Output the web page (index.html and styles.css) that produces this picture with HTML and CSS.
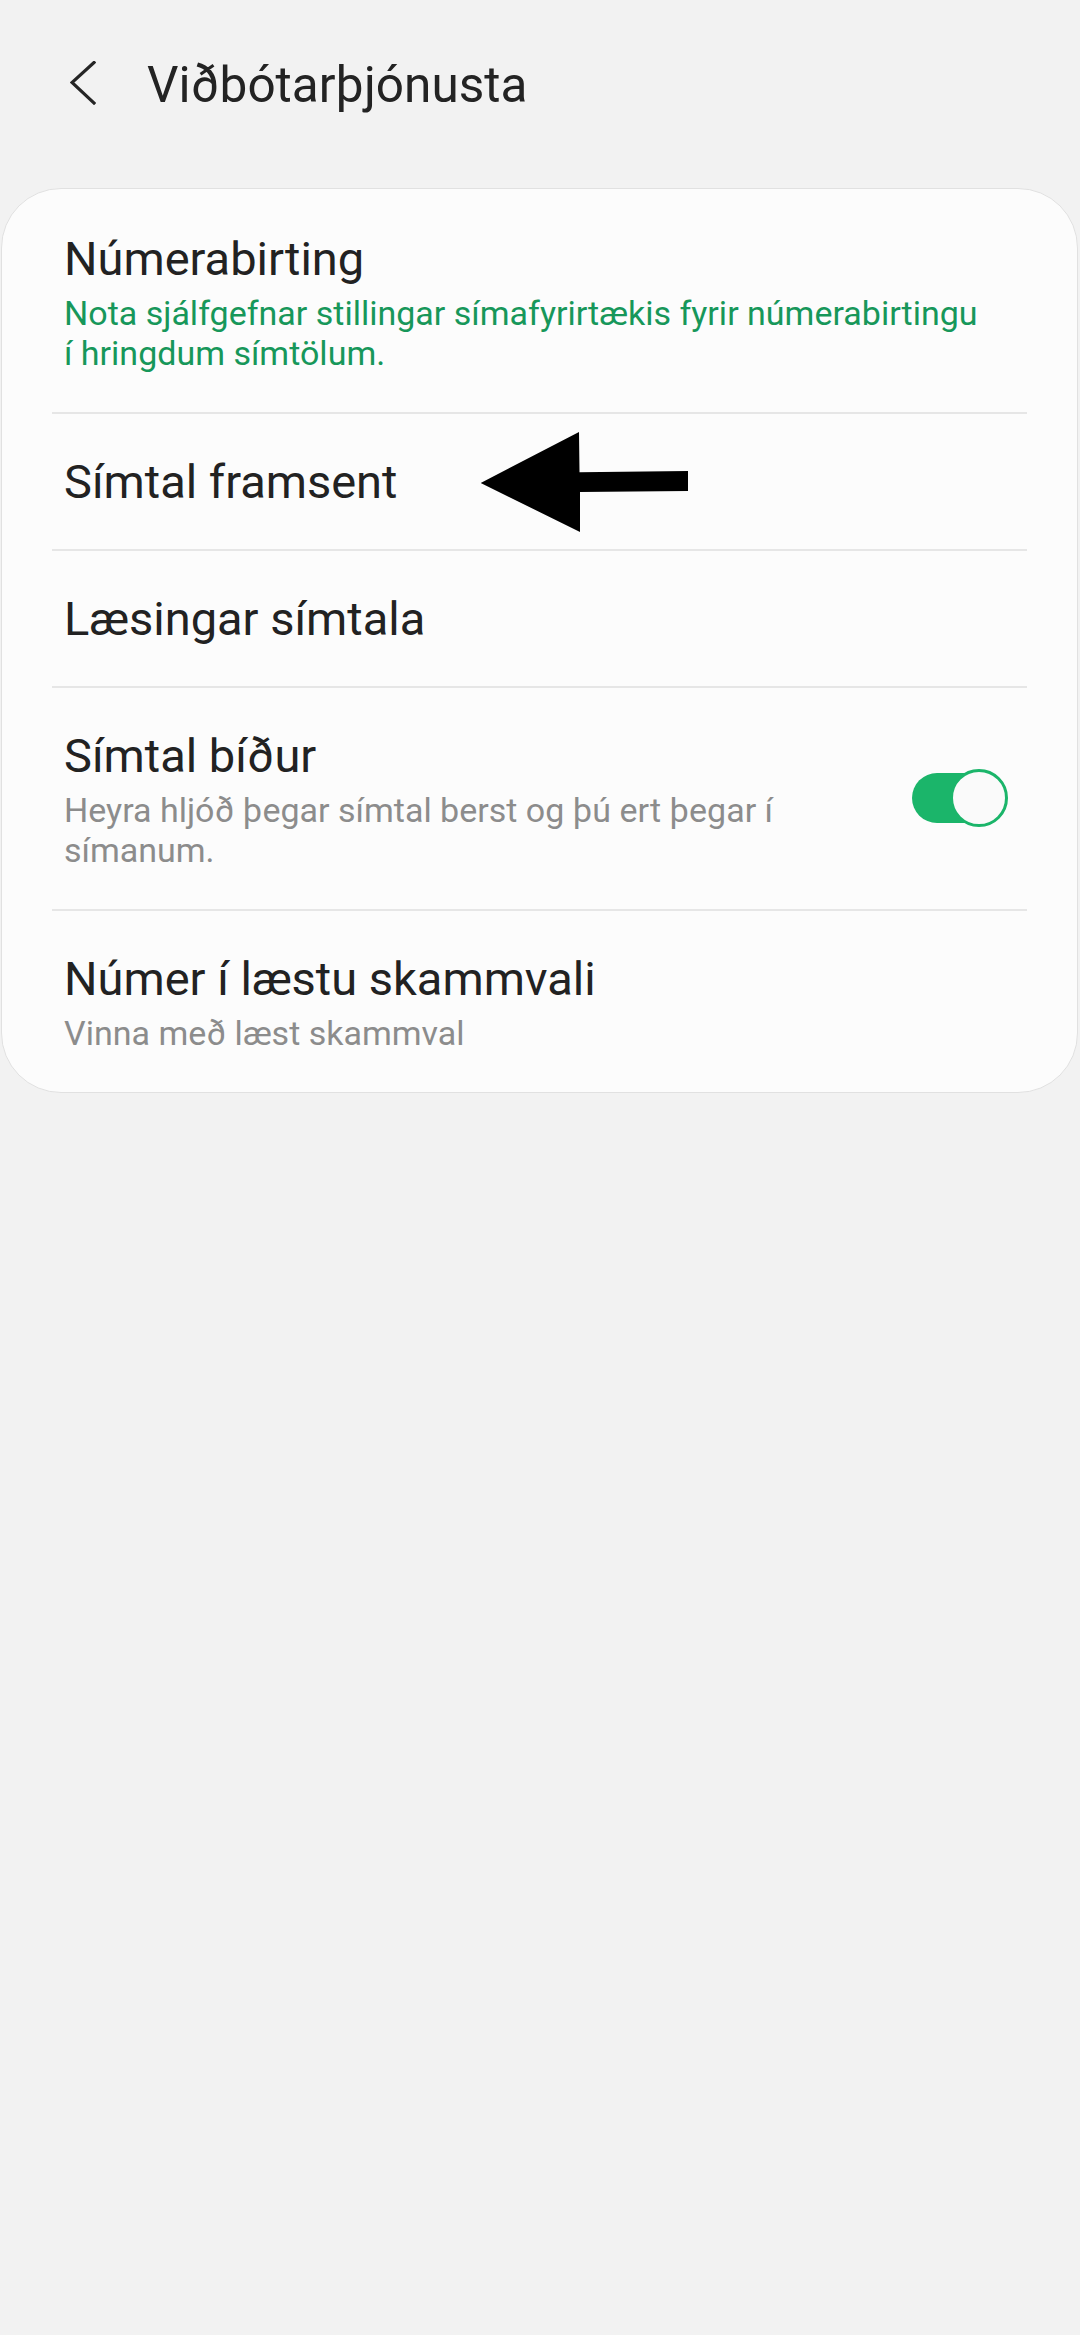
FILE: index.html
```html
<!DOCTYPE html>
<html lang="is">
<head>
<meta charset="utf-8">
<title>Viðbótarþjónusta</title>
<link rel="stylesheet" href="styles.css">
</head>
<body>
<div class="screen">
  <header class="topbar">
    <svg class="back" width="26" height="44" viewBox="0 0 26 44" aria-hidden="true">
      <polyline points="24,1.5 2,21.5 24,42" fill="none" stroke="#252525" stroke-width="3.2" stroke-linecap="square" stroke-linejoin="miter"/>
    </svg>
    <h1 class="title">Viðbótarþjónusta</h1>
  </header>

  <section class="card">
    <div class="row">
      <div class="text">
        <div class="label">Númerabirting</div>
        <div class="summary summary-green">Nota sjálfgefnar stillingar símafyrirtækis fyrir númerabirtingu<br>í hringdum símtölum.</div>
      </div>
    </div>
    <div class="row row-single">
      <div class="text">
        <div class="label">Símtal framsent</div>
      </div>
      <svg class="pointer" width="212" height="104" viewBox="0 0 212 104" aria-hidden="true">
        <polygon points="0.7,52 99,1 99.5,41.3 208,40 208,60 100,61 100,101" fill="#000"/>
      </svg>
    </div>
    <div class="row row-single">
      <div class="text">
        <div class="label">Læsingar símtala</div>
      </div>
    </div>
    <div class="row">
      <div class="text">
        <div class="label">Símtal bíður</div>
        <div class="summary">Heyra hljóð þegar símtal berst og þú ert þegar í<br>símanum.</div>
      </div>
      <div class="switch on" role="switch" aria-checked="true">
        <span class="track"></span>
        <span class="thumb"></span>
      </div>
    </div>
    <div class="row">
      <div class="text">
        <div class="label">Númer í læstu skammvali</div>
        <div class="summary">Vinna með læst skammval</div>
      </div>
    </div>
  </section>
</div>
</body>
</html>
```

FILE: styles.css
```css
html, body {
  margin: 0;
  padding: 0;
  background: #f2f2f2;
}

body {
  font-family: Roboto, "Noto Sans", "Liberation Sans", sans-serif;
  color: #222222;
  width: 1080px;
  min-height: 2335px;
}

.screen {
  display: flex;
  flex-direction: column;
}

.topbar {
  display: flex;
  align-items: flex-start;
  padding: 55px 0 73px 70px;
}

.back {
  flex: none;
  margin-top: 6px;
}

.title {
  margin: 0 0 0 51px;
  font-size: 49.5px;
  font-weight: 400;
  line-height: 60px;
  color: #232323;
}

.card {
  margin: 0 2px 0 1px;
  background: #fcfcfc;
  border: 1.5px solid #e1e1e1;
  border-radius: 60px;
  padding: 0 50px;
  display: flex;
  flex-direction: column;
}

.row {
  position: relative;
  display: flex;
  align-items: center;
  padding: 40px 19px 39px 12px;
}

.row:first-child {
  padding-top: 42px;
}

.row + .row {
  border-top: 2px solid #e6e6e6;
}

.row-single {
  padding-top: 40px;
  padding-bottom: 39px;
}

.text {
  flex: 1;
  min-width: 0;
}

.label {
  font-size: 47px;
  line-height: 56px;
  color: #222222;
  white-space: nowrap;
}

.summary {
  margin-top: 6px;
  font-size: 34px;
  line-height: 40px;
  color: #8c8c8c;
  white-space: nowrap;
}

.summary-green {
  color: #17975a;
}

.pointer {
  position: absolute;
  left: 428px;
  top: 17px;
}

.switch {
  position: relative;
  flex: none;
  width: 96px;
  height: 58px;
  margin-bottom: 2px;
}

.track {
  position: absolute;
  left: 0;
  top: 4px;
  width: 80px;
  height: 50px;
  border-radius: 25px;
  background: #1bb56a;
}

.thumb {
  position: absolute;
  right: 0;
  top: 0;
  width: 52px;
  height: 52px;
  border-radius: 50%;
  border: 3px solid #1bb56a;
  background: #fafafa;
}
```
